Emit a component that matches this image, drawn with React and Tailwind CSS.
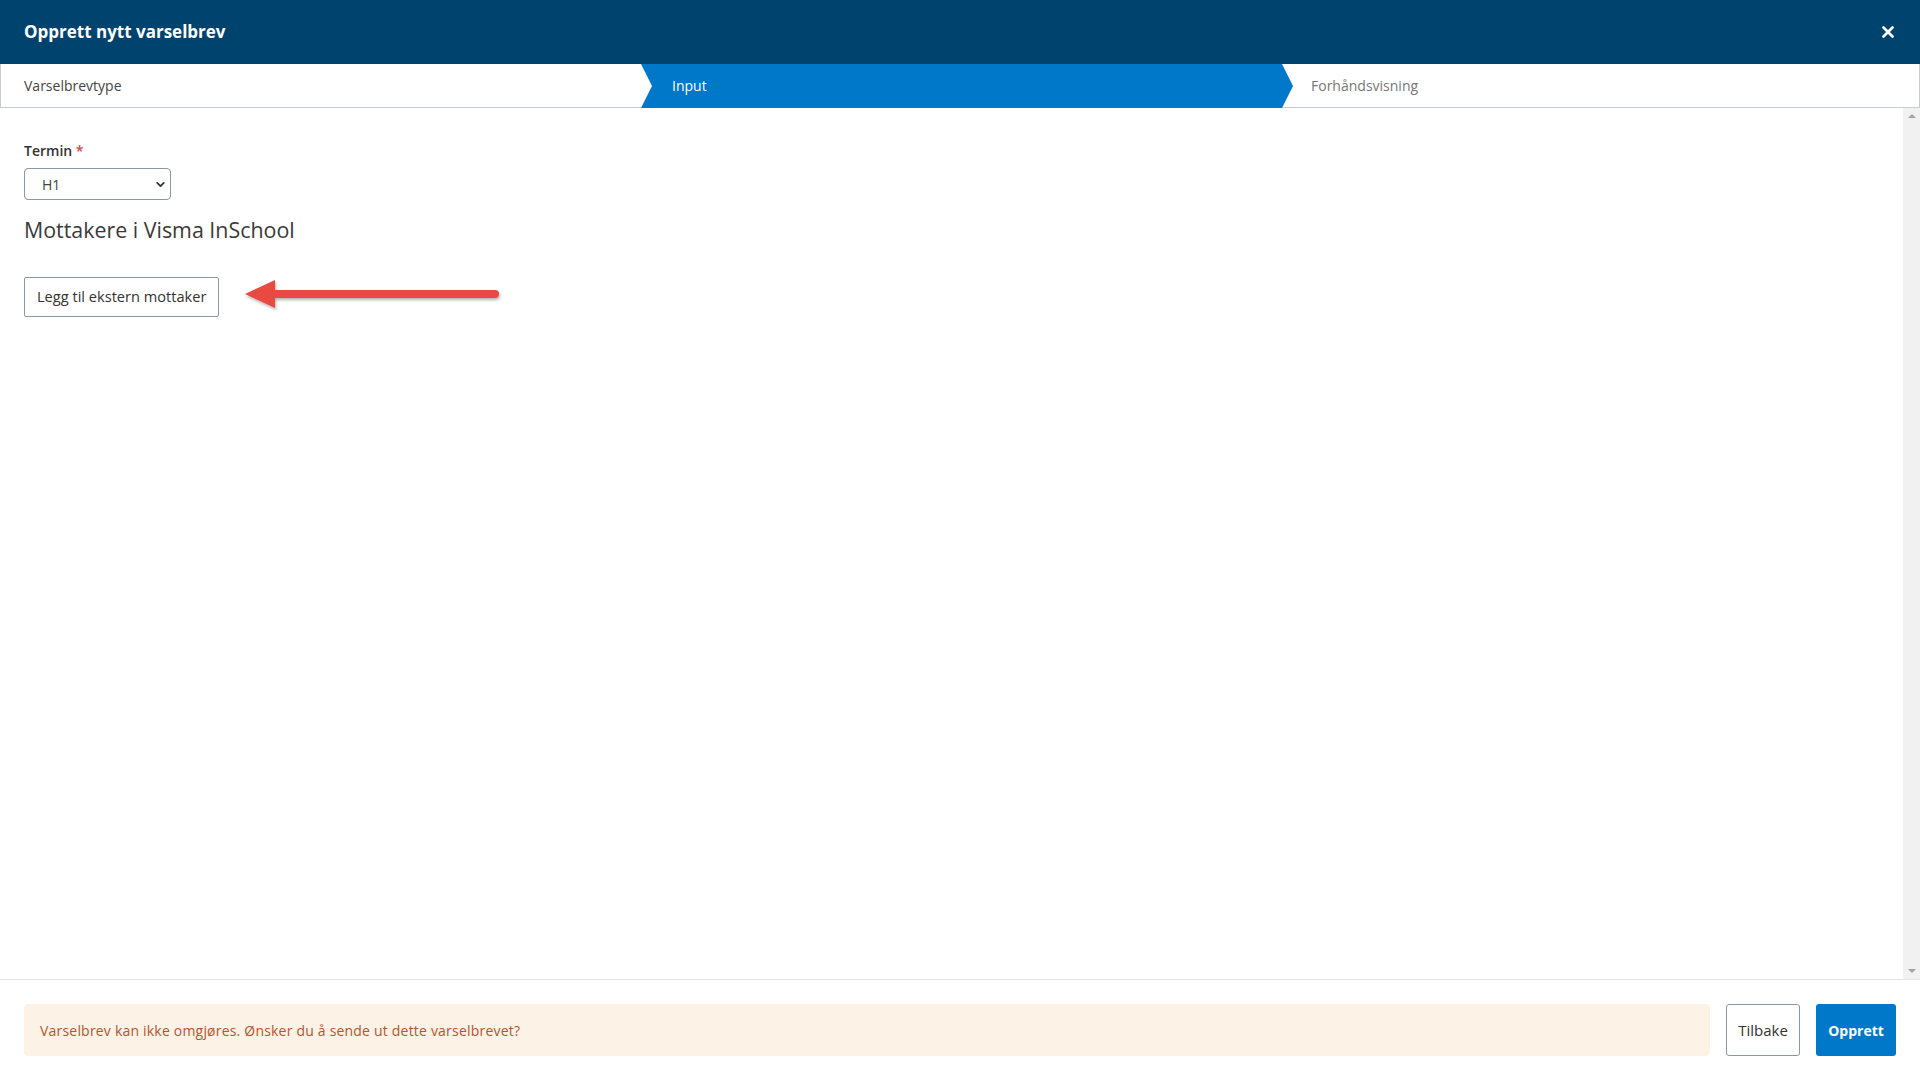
import { ChevronDown } from 'lucide-react';

const font = { fontFamily: '"Open Sans", "Noto Sans", sans-serif' };

function Stepper() {
  return (
    <div className="flex h-[44px] bg-white border-l border-r border-b border-[#c8cdd2] text-[14px]">
      <div className="w-[640px] flex-none flex items-center pl-[23px] text-[#444]">Varselbrevtype</div>
      <div className="w-[652px] flex-none flex items-center pl-[31px] pb-px -mb-px -mr-px bg-[#0078c9] text-white [clip-path:polygon(0_0,calc(100%-11px)_0,100%_50%,calc(100%-11px)_100%,0_100%,11px_50%)]">
        Input
      </div>
      <div className="flex-1 flex items-center pl-[19px] text-[#777]">Forhåndsvisning</div>
    </div>
  );
}

function Arrow() {
  return (
    <svg width="262" height="40" viewBox="0 0 262 40" className="flex-none">
      <defs>
        <filter id="sh" x="-10%" y="-40%" width="120%" height="180%">
          <feDropShadow dx="1" dy="2" stdDeviation="1.6" floodColor="#000" floodOpacity="0.3" />
        </filter>
      </defs>
      <path
        d="M1 17 L31 3 L31 13 L251 13 A4 4 0 0 1 251 21 L31 21 L31 31 Z"
        fill="#e84a40"
        filter="url(#sh)"
      />
    </svg>
  );
}

export default function App() {
  return (
    <div className="w-[1920px] h-[1080px] flex flex-col bg-white text-[#333]" style={font}>
      {/* header */}
      <div className="h-[64px] flex-none flex items-center justify-between bg-[#00436f] pl-6 pr-[26px]">
        <h1 className="text-[17px] font-bold text-white">Opprett nytt varselbrev</h1>
        <svg width="12" height="12" viewBox="0 0 12 12">
          <path d="M1.5 1.5 L10.5 10.5 M10.5 1.5 L1.5 10.5" stroke="#fff" strokeWidth="2.6" strokeLinecap="round" />
        </svg>
      </div>

      <Stepper />

      {/* body */}
      <div className="flex-1 flex min-h-0">
        <div className="flex-1 pl-6 pt-[33px]">
          <label className="block text-[14px] font-semibold leading-[20px] text-[#333]">
            Termin <span className="text-[#d0463c]">*</span>
          </label>
          <div className="relative mt-[7px] w-[147px] h-[32px]">
            <select className="appearance-none w-full h-full border border-[#8a98a6] rounded-[4px] pl-[17px] text-[14px] text-[#444] bg-white">
              <option>H1</option>
              <option>H2</option>
            </select>
            <ChevronDown size={13} strokeWidth={3.4} className="absolute right-[4px] top-[10px] text-[#333] pointer-events-none" />
          </div>
          <h2 className="mt-[15px] text-[21.4px] leading-[30px] text-[#3a3a3a]">Mottakere i Visma InSchool</h2>
          <div className="mt-[32px] flex items-center gap-[25px]">
            <button className="h-[40px] px-3 border border-[#8a98a6] rounded-[2px] bg-white text-[14.6px] text-[#333]">
              Legg til ekstern mottaker
            </button>
            <Arrow />
          </div>
        </div>
        <div className="w-[17px] flex-none bg-[#f1f1f1] flex flex-col justify-between items-center py-[6px]">
          <div className="w-0 h-0 border-l-[4px] border-r-[4px] border-b-[4px] border-l-transparent border-r-transparent border-b-[#a3a3a3]" />
          <div className="w-0 h-0 border-l-[4px] border-r-[4px] border-t-[4px] border-l-transparent border-r-transparent border-t-[#a3a3a3]" />
        </div>
      </div>

      {/* footer */}
      <div className="h-[101px] flex-none border-t border-[#e3e6e9] flex items-center gap-4 pl-6 pr-6">
        <div className="flex-1 h-[52px] rounded-[4px] bg-[#fdf2e6] flex items-center pl-4 text-[14px] tracking-[0.2px] text-[#b3562c]">
          Varselbrev kan ikke omgjøres. Ønsker du å sende ut dette varselbrevet?
        </div>
        <button className="w-[74px] h-[52px] border border-[#8a98a6] rounded-[3px] bg-white text-[15px] font-medium text-[#333]">
          Tilbake
        </button>
        <button className="w-[80px] h-[52px] rounded-[3px] bg-[#0078c9] text-[14px] font-bold text-white">
          Opprett
        </button>
      </div>
    </div>
  );
}
